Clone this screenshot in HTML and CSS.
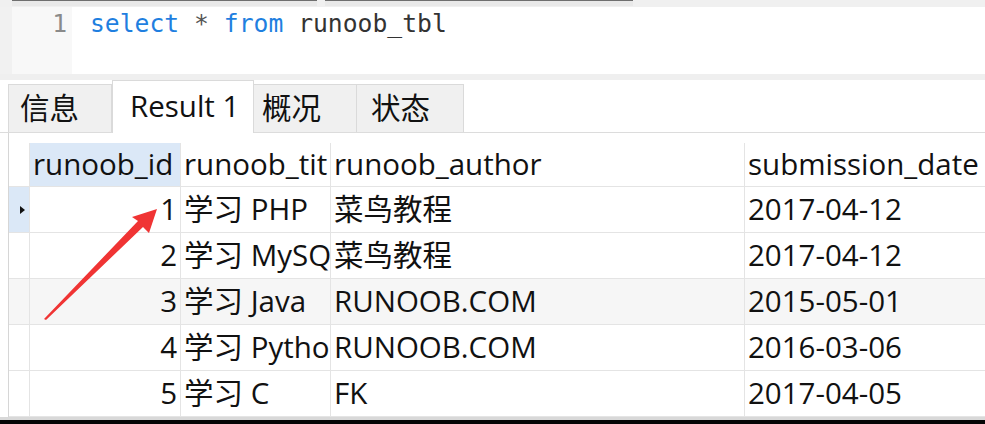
FILE: index.html
```html
<!DOCTYPE html>
<html lang="zh-CN">
<head>
<meta charset="utf-8">
<title>Query</title>
<link rel="stylesheet" href="styles.css">
</head>
<body>
<div class="page">
  <div class="topbar">
    <div class="seg seg-a"></div>
    <div class="seg seg-b"></div>
  </div>
  <div class="editor">
    <div class="gutter-edge"></div>
    <div class="gutter"><span class="lineno">1</span></div>
    <div class="code"><span class="kw">select</span> <span class="op">*</span> <span class="kw">from</span> <span class="id">runoob_tbl</span></div>
  </div>
  <div class="sep"></div>
  <div class="tabs">
    <div class="tab tab-info">信息</div>
    <div class="tab tab-active">Result 1</div>
    <div class="tab tab-overview">概况</div>
    <div class="tab tab-status">状态</div>
  </div>
  <div class="gridwrap">
    <div class="grid">
      <div class="cell rh"></div>
      <div class="cell hd hd-sel">runoob_id</div>
      <div class="cell hd">runoob_tit</div>
      <div class="cell hd">runoob_author</div>
      <div class="cell hd last">submission_date</div>

      <div class="cell rh rh-sel"><span class="tri"></span></div>
      <div class="cell num">1</div>
      <div class="cell">学习 PHP</div>
      <div class="cell">菜鸟教程</div>
      <div class="cell last">2017-04-12</div>

      <div class="cell rh"></div>
      <div class="cell num">2</div>
      <div class="cell">学习 MySQ</div>
      <div class="cell">菜鸟教程</div>
      <div class="cell last">2017-04-12</div>

      <div class="cell rh alt"></div>
      <div class="cell num alt">3</div>
      <div class="cell alt">学习 Java</div>
      <div class="cell alt">RUNOOB.COM</div>
      <div class="cell last alt">2015-05-01</div>

      <div class="cell rh"></div>
      <div class="cell num">4</div>
      <div class="cell">学习 Pytho</div>
      <div class="cell">RUNOOB.COM</div>
      <div class="cell last">2016-03-06</div>

      <div class="cell rh"></div>
      <div class="cell num">5</div>
      <div class="cell">学习 C</div>
      <div class="cell">FK</div>
      <div class="cell last">2017-04-05</div>
    </div>
  </div>
  <div class="bottomline"></div>
  <div class="blackbar"></div>

  <svg class="arrow" width="985" height="424" viewBox="0 0 985 424">
    <polygon points="157,209 149,233 143,227 46,320 44,319 138,221 132,217" fill="#f03434"/>
  </svg>
</div>
</body>
</html>
```

FILE: styles.css
```css
html, body {
  margin: 0;
  padding: 0;
  background: #ffffff;
}

.page {
  position: relative;
  width: 985px;
  height: 424px;
  overflow: hidden;
  display: flex;
  flex-direction: column;
  font-family: "Open Sans", "Noto Sans CJK SC", sans-serif;
  color: #111;
}

.topbar {
  height: 7px;
  flex: 0 0 7px;
  background: #f0f0f0;
  display: flex;
  gap: 8px;
  padding-left: 12px;
}

.seg {
  height: 5px;
  border-top: 1px solid #6f6f6f;
  background: #e9e9e9;
}

.seg-a { width: 305px; }
.seg-b { width: 308px; }

.editor {
  height: 67px;
  flex: 0 0 67px;
  display: flex;
  background: #ffffff;
}

.gutter-edge {
  width: 12px;
  background: #f1f1f1;
}

.gutter {
  width: 60px;
  background: #f8f8f8;
  text-align: right;
  box-sizing: border-box;
  padding-right: 5px;
}

.lineno,
.code {
  font-family: "DejaVu Sans Mono", "Liberation Mono", monospace;
  font-size: 24.7px;
  line-height: 33px;
}

.lineno {
  color: #8a8a8a;
}

.code {
  padding-left: 18px;
  color: #333;
  white-space: pre;
}

.kw { color: #1f7fe0; }
.op { color: #555; }
.id { color: #333; }

.sep {
  height: 6px;
  flex: 0 0 6px;
  background: #efefef;
}

.tabs {
  height: 53px;
  flex: 0 0 53px;
  box-sizing: border-box;
  display: flex;
  align-items: flex-end;
  padding-left: 8px;
  border-bottom: 1px solid #dcdcdc;
  background: #ffffff;
}

.tab {
  box-sizing: border-box;
  height: 48px;
  background: #f0f0f0;
  border: 1px solid #dadada;
  border-bottom: none;
  font-size: 29.5px;
  line-height: 46px;
  color: #111;
  white-space: nowrap;
}

.tab-info { width: 104px; padding-left: 11px; }
.tab-active {
  width: 142px;
  height: 53px;
  margin-bottom: -1px;
  background: #ffffff;
  padding-left: 17px;
  line-height: 50px;
}
.tab-overview { width: 103px; padding-left: 8px; border-left: none; }
.tab-status { width: 107px; padding-left: 14px; border-left: none; }

.gridwrap {
  height: 284px;
  flex: 0 0 284px;
  box-sizing: border-box;
  margin-left: 8px;
  border-left: 1px solid #d6d6d6;
  padding-top: 10px;
  background: #ffffff;
}

.grid {
  display: grid;
  grid-template-columns: 21px 151px 150px 414px 260px;
  grid-template-rows: 44px repeat(5, 46px);
}

.cell {
  box-sizing: border-box;
  border-right: 1px solid #e4e4e4;
  border-bottom: 1px solid #e4e4e4;
  font-size: 29.5px;
  line-height: 44px;
  padding-left: 3px;
  white-space: nowrap;
  overflow: hidden;
  color: #111;
}

.hd {
  line-height: 42px;
}

.hd-sel {
  background: #dbe8f7;
}

.rh {
  padding: 0;
  display: flex;
  align-items: center;
  justify-content: center;
}

.rh-sel {
  background: #dbe8f7;
}

.tri {
  width: 0;
  height: 0;
  border-top: 4px solid transparent;
  border-bottom: 4px solid transparent;
  border-left: 5px solid #111;
  margin-left: 7px;
}

.num {
  text-align: right;
  padding-left: 0;
  padding-right: 3px;
}

.alt {
  background: #f6f6f6;
}

.last {
  border-right: none;
}

.bottomline {
  height: 3px;
  flex: 0 0 3px;
  background: #d8d8d8;
}

.blackbar {
  flex: 1 1 auto;
  background: #050505;
}

.arrow {
  position: absolute;
  left: 0;
  top: 0;
  pointer-events: none;
}
```
